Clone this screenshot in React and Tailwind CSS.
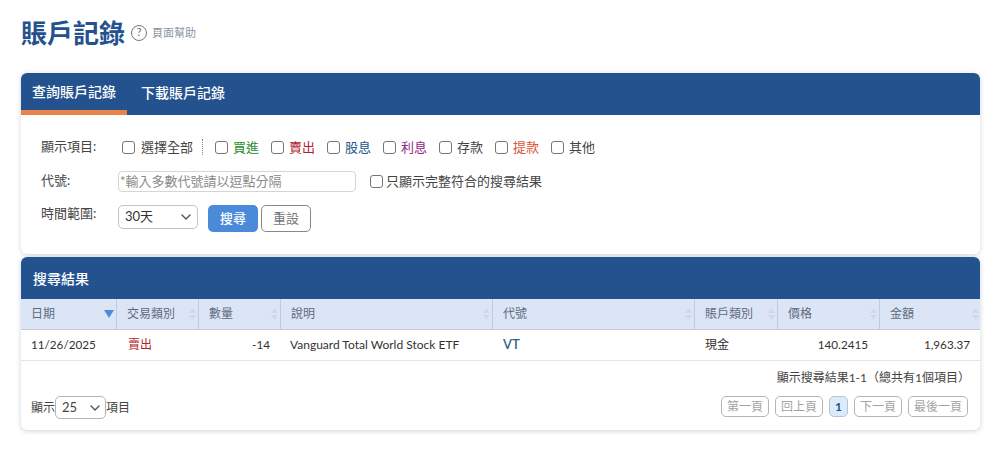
const FONT = "font-['Lato','Noto_Sans_CJK_TC','Noto_Sans_CJK_JP',sans-serif]";

const filters = [
  { label: "買進", color: "text-[#2e8b2e]" },
  { label: "賣出", color: "text-[#b3232b]" },
  { label: "股息", color: "text-[#20578f]" },
  { label: "利息", color: "text-[#8f2a85]" },
  { label: "存款", color: "text-[#444]" },
  { label: "提款", color: "text-[#d9553a]" },
  { label: "其他", color: "text-[#444]" },
];

const columns = [
  { label: "日期", w: "w-[96px]", active: true },
  { label: "交易類別", w: "w-[82px]" },
  { label: "數量", w: "w-[82px]" },
  { label: "說明", w: "w-[212px]" },
  { label: "代號", w: "w-[202px]" },
  { label: "賬戶類別", w: "w-[83px]" },
  { label: "價格", w: "w-[102px]" },
  { label: "金額", w: "w-[101px]" },
];

const pages = ["第一頁", "回上頁"];
const pagesAfter = ["下一頁", "最後一頁"];

function Box() {
  return <span className="inline-block w-[13px] h-[13px] shrink-0 rounded-[3px] border border-[#767676] bg-white" />;
}

function Chevron() {
  return (
    <svg width="10" height="6" viewBox="0 0 10 6" fill="none" className="shrink-0">
      <path d="M1 1l4 4 4-4" stroke="#555" strokeWidth="1.4" strokeLinecap="round" strokeLinejoin="round" />
    </svg>
  );
}

function SortIcon({ active }) {
  if (active) {
    return (
      <svg width="10" height="8" viewBox="0 0 10 8" className="shrink-0">
        <path d="M0 0h10L5 8z" fill="#4a90d9" />
      </svg>
    );
  }
  return (
    <svg width="7" height="12" viewBox="0 0 7 12" className="shrink-0">
      <path d="M3.5 0L7 5H0z" fill="#d0d9e8" />
      <path d="M3.5 12L0 7h7z" fill="#d0d9e8" />
    </svg>
  );
}

function PageButton({ children }) {
  return (
    <span className="h-[21px] px-[5px] flex items-center rounded-[5px] border border-[#b5b5b5] text-[12px] text-[#a3a3a3] bg-white">
      {children}
    </span>
  );
}

export default function App() {
  return (
    <div className={`${FONT} min-h-[451px] bg-white px-[21px] pr-[25px] text-[#333]`}>
      <div className="h-[73px] flex items-start pt-[16px] gap-[6px]">
        <h1 className="text-[26px] leading-[34px] font-bold text-[#24528f]">賬戶記錄</h1>
        <div className="h-[34px] flex items-center gap-[5px]">
          <span className="w-[16px] h-[16px] rounded-full border border-[#777] text-[10.5px] flex items-center justify-center text-[#666]">?</span>
          <span className="text-[11px] text-[#8a94a3]">頁面幫助</span>
        </div>
      </div>

      <section className="h-[181px] rounded-[6px] bg-white shadow-[0_1px_5px_rgba(30,50,90,0.2)] overflow-hidden">
        <div className="h-[42px] bg-[#24528f] flex text-white text-[14px] font-medium">
          <div className="w-[106px] flex items-center justify-center border-b-[5px] border-[#e8834a]">查詢賬戶記錄</div>
          <div className="w-[112px] flex items-center justify-center pb-[3px]">下載賬戶記錄</div>
        </div>

        <div className="pt-[20px] pl-[20px] text-[13px]">
          <div className="flex items-center h-[24px]">
            <span className="w-[81px] text-[#444]">顯示項目:</span>
            <Box />
            <span className="ml-[6px] mt-[2px] text-[#444]">選擇全部</span>
            <span className="ml-[9px] mr-[12px] h-[16px] border-l border-dotted border-[#888]" />
            {filters.map((f) => (
              <span key={f.label} className="flex items-center gap-[5px] w-[56px]">
                <Box />
                <span className={`${f.color} mt-[2px]`}>{f.label}</span>
              </span>
            ))}
          </div>

          <div className="flex items-center h-[21px] mt-[12px]">
            <span className="w-[77px] text-[#444] -mt-[2px]">代號:</span>
            <div className="w-[238px] h-[21px] rounded-[4px] border border-[#d5d5d5] px-[1px] flex items-center text-[13px] text-[#8a8a8a]">
              *輸入多數代號請以逗點分隔
            </div>
            <span className="ml-[14px] flex"><Box /></span>
            <span className="ml-[3px] text-[#444]">只顯示完整符合的搜尋結果</span>
          </div>

          <div className="flex items-start mt-[13px]">
            <span className="w-[77px] text-[#444] -mt-[1px]">時間範圍:</span>
            <div className="w-[80px] h-[24px] rounded-[5px] border border-[#c4c4c4] pl-[6px] pr-[6px] flex items-center justify-between text-[13px] text-[#333]">
              <span>30天</span>
              <Chevron />
            </div>
            <span className="ml-[10px] w-[50px] h-[27px] rounded-[5px] bg-[#4a8ad8] text-white font-medium flex items-center justify-center">搜尋</span>
            <span className="ml-[3px] w-[50px] h-[27px] rounded-[5px] border border-[#888] text-[#777] flex items-center justify-center">重設</span>
          </div>
        </div>
      </section>

      <section className="mt-[3px] h-[173px] rounded-[6px] bg-white shadow-[0_1px_5px_rgba(30,50,90,0.22)] overflow-hidden">
        <div className="h-[42px] bg-[#24528f] flex items-center pl-[12px] text-white text-[14px] font-medium">搜尋結果</div>

        <table className="w-full table-fixed border-collapse text-[12px]">
          <thead>
            <tr className="h-[30px] bg-[#dce5f5] text-[#5c6b80] border-b border-[#c5cad3]">
              {columns.map((c, i) => (
                <th key={c.label} className={`${c.w} p-0 font-normal text-left`}>
                  <div className={`flex items-center justify-between pl-[10px] pr-[2px] h-[30px] ${i < columns.length - 1 ? "border-r border-[#c2cbdb]" : ""}`}>
                    <span>{c.label}</span>
                    <SortIcon active={c.active} />
                  </div>
                </th>
              ))}
            </tr>
          </thead>
          <tbody>
            <tr className="h-[31px] border-b border-[#e3e5e8] text-[#333]">
              <td className="pl-[10px] text-[11.7px]">11/26/2025</td>
              <td className="pl-[11px] text-[#b3232b]">賣出</td>
              <td className="pr-[11px] text-right text-[11.7px]">-14</td>
              <td className="pl-[9px] text-[12px] whitespace-nowrap">Vanguard Total World Stock ETF</td>
              <td className="pl-[10px] text-[#2a5f8f] text-[13px] font-semibold">VT</td>
              <td className="pl-[10px]">現金</td>
              <td className="pr-[12px] text-right text-[11.7px]">140.2415</td>
              <td className="pr-[11px] text-right text-[11.7px]">1,963.37</td>
            </tr>
          </tbody>
        </table>

        <div className="flex justify-end pr-[10px] mt-[8px] text-[12px] leading-[17px] text-[#444]">顯示搜尋結果1-1（總共有1個項目）</div>
        <div className="flex items-start justify-between pl-[10px] pr-[12px] mt-[10px]">
          <div className="flex items-center text-[12px] text-[#444]">
            <span>顯示</span>
            <div className="w-[51px] h-[23px] rounded-[5px] border border-[#b5b5b5] pl-[6px] pr-[5px] flex items-center justify-between text-[13px]">
              <span>25</span>
              <Chevron />
            </div>
            <span>項目</span>
          </div>
          <div className="flex items-center gap-[6px]">
            {pages.map((p) => <PageButton key={p}>{p}</PageButton>)}
            <span className="h-[21px] w-[19px] flex items-center justify-center rounded-[5px] border border-[#b5c5d8] bg-[#dcebf8] text-[12px] font-bold text-[#24528f]">1</span>
            {pagesAfter.map((p) => <PageButton key={p}>{p}</PageButton>)}
          </div>
        </div>
      </section>
    </div>
  );
}
